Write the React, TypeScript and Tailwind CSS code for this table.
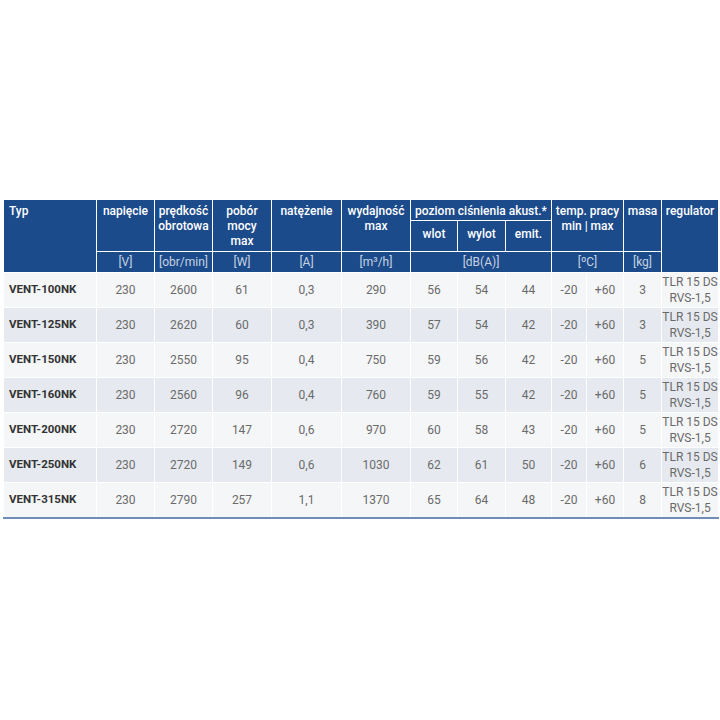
import React from "react";

type Row = {
  typ: string;
  v: string;
  obr: string;
  w: string;
  a: string;
  q: string;
  wlot: string;
  wylot: string;
  emit: string;
  mass: string;
};

const rows: Row[] = [
  { typ: "VENT-100NK", v: "230", obr: "2600", w: "61", a: "0,3", q: "290", wlot: "56", wylot: "54", emit: "44", mass: "3" },
  { typ: "VENT-125NK", v: "230", obr: "2620", w: "60", a: "0,3", q: "390", wlot: "57", wylot: "54", emit: "42", mass: "3" },
  { typ: "VENT-150NK", v: "230", obr: "2550", w: "95", a: "0,4", q: "750", wlot: "59", wylot: "56", emit: "42", mass: "5" },
  { typ: "VENT-160NK", v: "230", obr: "2560", w: "96", a: "0,4", q: "760", wlot: "59", wylot: "55", emit: "42", mass: "5" },
  { typ: "VENT-200NK", v: "230", obr: "2720", w: "147", a: "0,6", q: "970", wlot: "60", wylot: "58", emit: "43", mass: "5" },
  { typ: "VENT-250NK", v: "230", obr: "2720", w: "149", a: "0,6", q: "1030", wlot: "62", wylot: "61", emit: "50", mass: "6" },
  { typ: "VENT-315NK", v: "230", obr: "2790", w: "257", a: "1,1", q: "1370", wlot: "65", wylot: "64", emit: "48", mass: "8" },
];

const widths = [93, 58, 58, 59, 70, 69, 47, 48, 46, 35, 37, 38, 57];

const th = "border border-white bg-[#1c4b8c] text-white font-medium text-[12px] leading-[15px] align-top pt-[4px] px-0";
const unit = "border border-white bg-[#1c4b8c] text-white/75 font-normal text-[12px] leading-[15px] text-center align-middle";
const td = "border border-white text-center text-[#6a6a6a] text-[12px]";

const App = () => {
  return (
    <main
      className="w-[720px] h-[720px] bg-white pt-[199px] pl-[3px]"
      style={{ fontFamily: "Roboto, 'Liberation Sans', sans-serif" }}
    >
      <table className="border-collapse table-fixed w-[715px] border-b-2 border-b-[#6f8db5]">
        <colgroup>
          {widths.map((w, i) => (
            <col key={i} style={{ width: w }} />
          ))}
        </colgroup>
        <thead>
          <tr className="h-[21px]">
            <th rowSpan={3} className={th + " text-left pl-[5px]"}>Typ</th>
            <th rowSpan={2} className={th + " text-center"}>napięcie</th>
            <th rowSpan={2} className={th + " text-center"}>prędkość<br />obrotowa</th>
            <th rowSpan={2} className={th + " text-center"}>pobór<br />mocy<br />max</th>
            <th rowSpan={2} className={th + " text-center"}>natężenie</th>
            <th rowSpan={2} className={th + " text-center"}>wydajność<br />max</th>
            <th colSpan={3} className={th + " text-center whitespace-nowrap text-[11.5px]"}>poziom ciśnienia akust.*</th>
            <th colSpan={2} rowSpan={2} className={th + " text-center"}>temp. pracy<br />min | max</th>
            <th rowSpan={2} className={th + " text-center"}>masa</th>
            <th rowSpan={3} className={th + " text-center"}>regulator</th>
          </tr>
          <tr className="h-[31px]">
            <th className={th + " text-center pt-[6px]"}>wlot</th>
            <th className={th + " text-center pt-[6px]"}>wylot</th>
            <th className={th + " text-center pt-[6px]"}>emit.</th>
          </tr>
          <tr className="h-[21px]">
            <th className={unit}>[V]</th>
            <th className={unit}>[obr/min]</th>
            <th className={unit}>[W]</th>
            <th className={unit}>[A]</th>
            <th className={unit}>[m³/h]</th>
            <th colSpan={3} className={unit}>[dB(A)]</th>
            <th colSpan={2} className={unit}>[ºC]</th>
            <th className={unit}>[kg]</th>
          </tr>
        </thead>
        <tbody>
          {rows.map((r, i) => (
            <tr key={r.typ} className={"h-[35px] " + (i % 2 === 0 ? "bg-[#f5f6f8]" : "bg-[#e6eaf0]")}>
              <td className="border border-white text-left pl-[5px] font-bold text-[#333] text-[11.5px]">{r.typ}</td>
              <td className={td}>{r.v}</td>
              <td className={td}>{r.obr}</td>
              <td className={td}>{r.w}</td>
              <td className={td}>{r.a}</td>
              <td className={td}>{r.q}</td>
              <td className={td}>{r.wlot}</td>
              <td className={td}>{r.wylot}</td>
              <td className={td}>{r.emit}</td>
              <td className={td}>-20</td>
              <td className={td}>+60</td>
              <td className={td}>{r.mass}</td>
              <td className="border border-white text-center text-[#6a6a6a] text-[12px] leading-[16px]">
                TLR 15 DS<br />RVS-1,5
              </td>
            </tr>
          ))}
        </tbody>
      </table>
    </main>
  );
};

export default App;
